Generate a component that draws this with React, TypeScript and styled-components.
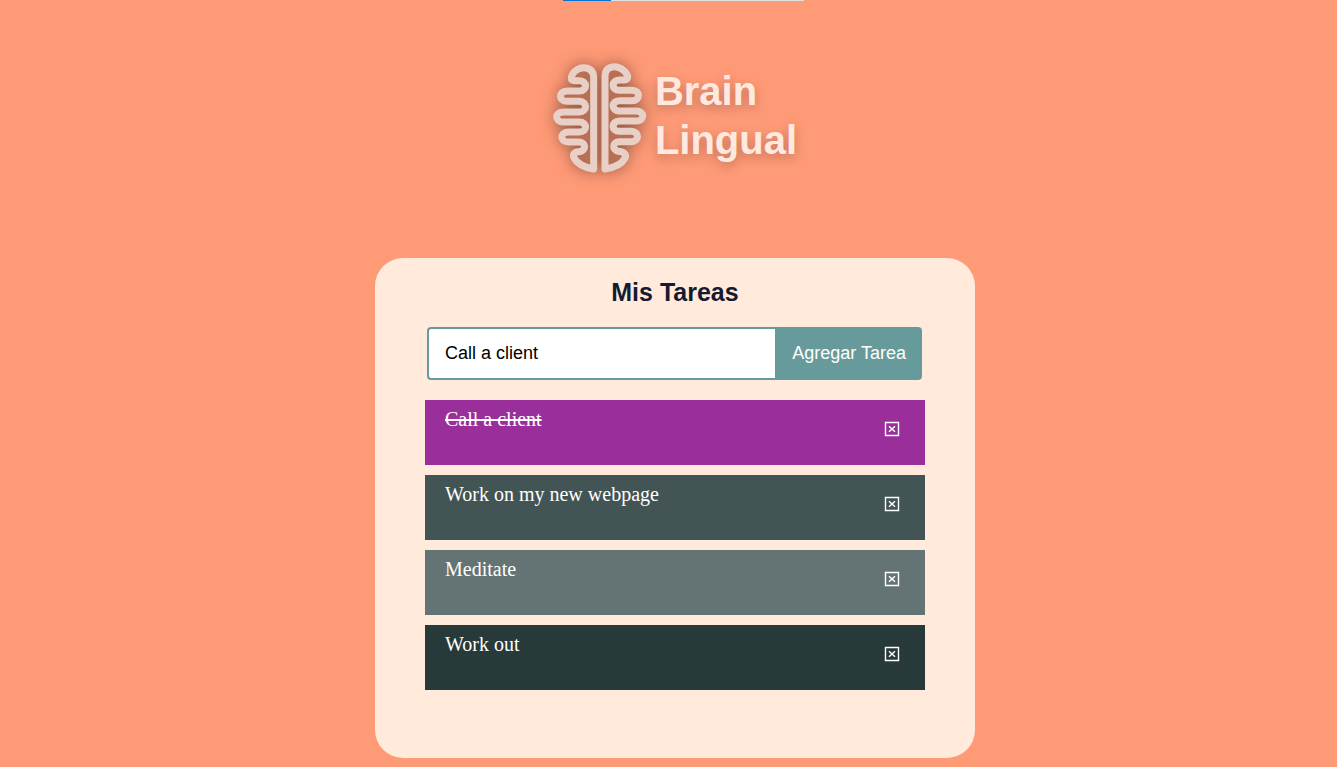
import React, { useState } from "react";
import styled, { createGlobalStyle } from "styled-components";

const GlobalStyle = createGlobalStyle`
  * { box-sizing: border-box; }
  body { margin: 0; background: #ff9a76; }
`;

const Page = styled.div`
  min-height: 100vh;
  padding: 0 0 9px 13px;
  display: flex;
  flex-direction: column;
  align-items: center;
`;

const Progress = styled.div`
  display: flex;
  width: 241px;
  height: 1px;
  margin-left: 17px;
  background: #e0e0e0;
`;

const ProgressValue = styled.div`
  width: 20%;
  background: #0075d8;
`;

const Header = styled.header`
  display: flex;
  align-items: flex-start;
  height: 217px;
  margin-top: 40px;
`;

const BrainSvg = styled.svg`
  width: 130px;
  height: 150px;
  overflow: visible;
  filter: drop-shadow(0 0 8px rgba(0, 0, 0, 0.4));
`;

const Brand = styled.h1`
  margin: 26px 0 0 -15px;
  padding-right: 13px;
  font: bold 40px/49px "Liberation Sans", Arial, sans-serif;
  color: #ffe8df;
  text-shadow: 0 4px 12px rgba(0, 0, 0, 0.25);
`;

const BrandLine = styled.span`
  display: block;
`;

const Card = styled.main`
  width: 600px;
  max-width: 100%;
  min-height: 500px;
  padding: 16px 50px 50px;
  border-radius: 28px;
  background: #ffeadb;
`;

const Title = styled.h2`
  margin: 0 0 17px;
  text-align: center;
  font: bold 25px/36px "Liberation Sans", Arial, sans-serif;
  color: #161a31;
`;

const Form = styled.form`
  display: flex;
  height: 53px;
  margin: 0 3px 20px 2px;
`;

const TaskInput = styled.input`
  flex: 1;
  min-width: 0;
  padding: 0 16px;
  border: 2px solid #679b9b;
  border-right: 0;
  border-radius: 4px 0 0 4px;
  outline: none;
  background: #fff;
  color: #000;
  font: 18px "Liberation Sans", Arial, sans-serif;
`;

const AddButton = styled.button`
  padding: 0 16px 0 17px;
  border: 0;
  border-radius: 0 4px 4px 0;
  background: #679b9b;
  color: #fff;
  font: 18px "Liberation Sans", Arial, sans-serif;
  cursor: pointer;
`;

const List = styled.ul`
  display: flex;
  flex-direction: column;
  gap: 10px;
  margin: 0;
  padding: 0;
  list-style: none;
`;

const Row = styled.li<{ $color: string }>`
  display: flex;
  justify-content: space-between;
  align-items: flex-start;
  height: 65px;
  padding: 7px 25px 0 20px;
  background: ${(p) => p.$color};
`;

const TaskText = styled.span<{ $done: boolean }>`
  font: 20px/24px "Liberation Serif", "Times New Roman", serif;
  color: #fff;
  text-decoration: ${(p) => (p.$done ? "line-through" : "none")};
`;

const DeleteButton = styled.button`
  display: flex;
  margin-top: 14px;
  padding: 0;
  border: 0;
  background: none;
  color: #fff;
  cursor: pointer;
`;

const Brain = () => (
  <BrainSvg viewBox="0 2 390 450" aria-hidden="true">
    <g fill="#b96f54" stroke="#e8d0c6" strokeWidth="21" strokeLinejoin="round">
      <path d="M161 386V112C161 92 150 82 131 82C110 82 94 100 94 114C94 119 98 121 104 121H118C143 121 143 152 118 152H81C55 152 55 183 81 183H118C143 183 143 215 118 215H71C43 215 43 245 71 245H118C143 245 143 275 118 275H85C59 275 59 305 85 305H115C140 305 140 332 116 334C102 335 97 343 103 354C110 368 132 381 161 386Z" />
      <path d="M195 386V108C195 89 205 79 223 79C244 79 263 98 263 111C263 116 259 119 253 119H238C213 119 213 150 238 150H276C302 150 302 181 276 181H238C213 181 213 212 238 212H288C315 212 315 242 288 242H238C213 242 213 273 238 273H274C299 273 299 304 274 304H238C216 304 216 330 235 333C251 334 261 342 255 354C246 370 224 382 195 386Z" />
    </g>
  </BrainSvg>
);

const tasks = [
  { text: "Call a client", color: "#9a2e9a", done: true },
  { text: "Work on my new webpage", color: "#435454", done: false },
  { text: "Meditate", color: "#647373", done: false },
  { text: "Work out", color: "#283939", done: false },
];

export default function App() {
  const [value, setValue] = useState("Call a client");
  return (
    <>
      <GlobalStyle />
      <Page>
        <Progress><ProgressValue /></Progress>
        <Header>
          <Brain />
          <Brand><BrandLine>Brain</BrandLine><BrandLine>Lingual</BrandLine></Brand>
        </Header>
        <Card>
          <Title>Mis Tareas</Title>
          <Form onSubmit={(e) => e.preventDefault()}>
            <TaskInput aria-label="Tarea" value={value} onChange={(e) => setValue(e.target.value)} />
            <AddButton type="submit">Agregar Tarea</AddButton>
          </Form>
          <List>
            {tasks.map((t) => (
              <Row key={t.text} $color={t.color}>
                <TaskText $done={t.done}>{t.text}</TaskText>
                <DeleteButton type="button" aria-label={`Eliminar ${t.text}`}>
                  <svg width="16" height="16" viewBox="0 0 16 16" fill="none" stroke="currentColor">
                    <path d="M1.5 1.5h13v13h-13z" strokeWidth="1.4" />
                    <path d="M5 5.2l6 5.6M11 5.2l-6 5.6" strokeWidth="1.5" />
                  </svg>
                </DeleteButton>
              </Row>
            ))}
          </List>
        </Card>
      </Page>
    </>
  );
}
